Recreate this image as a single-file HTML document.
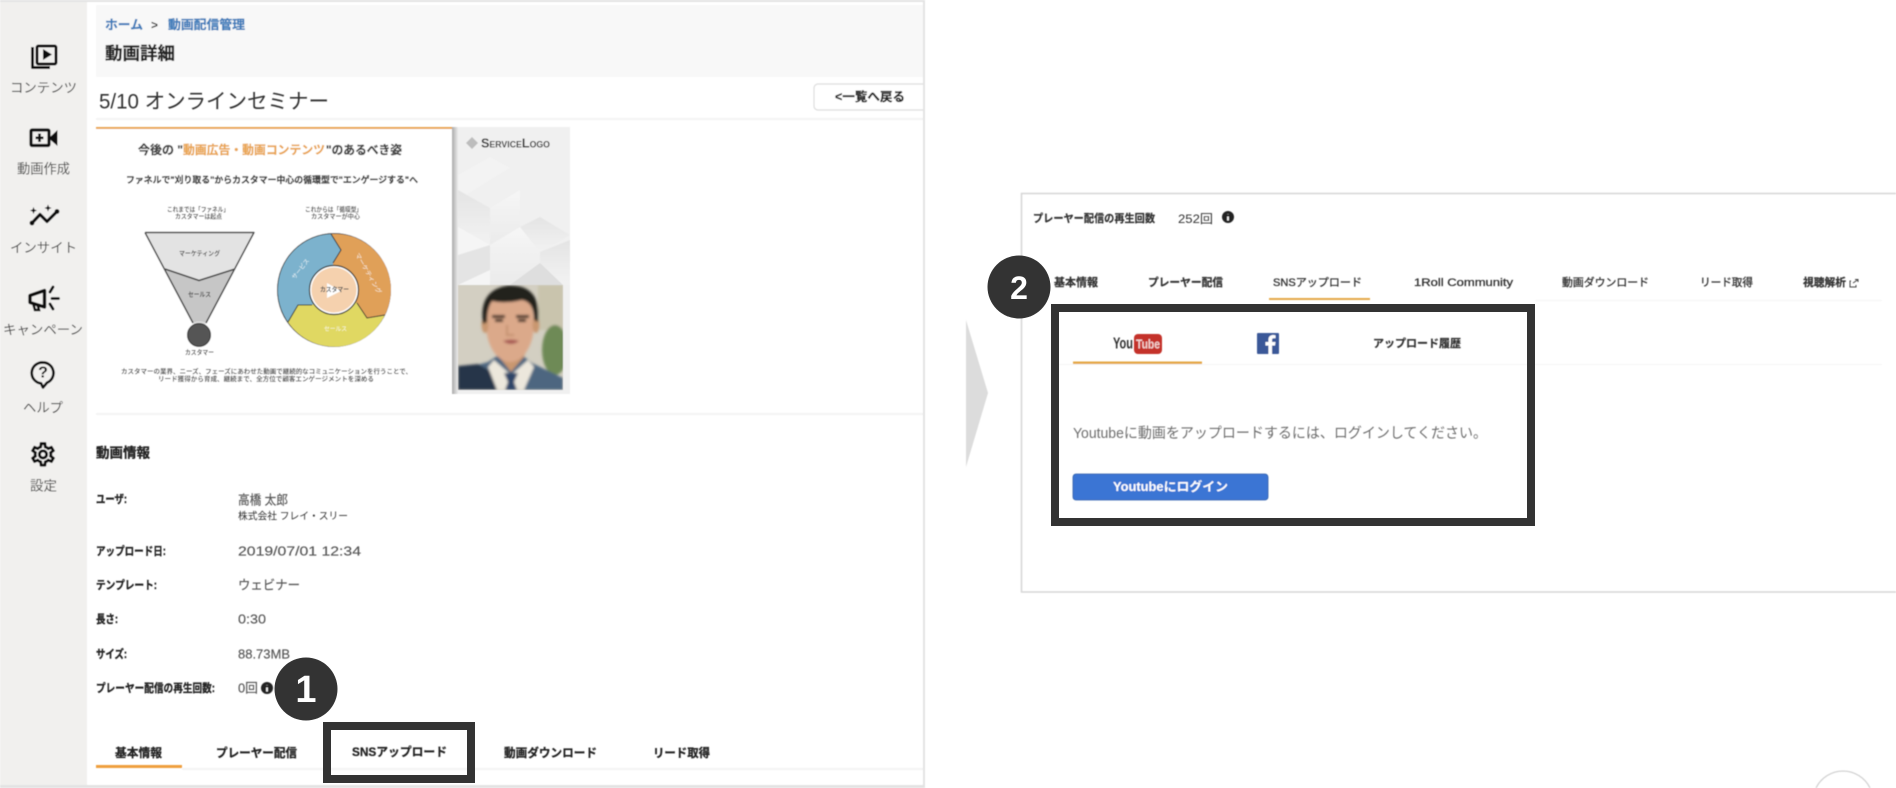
<!DOCTYPE html>
<html lang="ja"><head><meta charset="utf-8"><title>動画詳細</title>
<style>
html,body{margin:0;padding:0;background:#fff;width:1896px;height:788px;overflow:hidden}
svg{display:block;position:absolute;left:0;top:0;overflow:hidden}
text{font-family:"Liberation Sans","Noto Sans CJK JP",sans-serif;dominant-baseline:central;fill:#333}
text:not(.r){transform:translateY(1px)}
.b{font-weight:700;fill:#222;stroke:#222;stroke-width:.3px}
.g{fill:#555}
.k{font-weight:700;font-size:11.5px;fill:#222;stroke:#222;stroke-width:.3px}
.v{font-size:13px;fill:#555;stroke:#555;stroke-width:.15px}
.sm{font-size:6.5px;font-weight:700;fill:#555}
.lb{font-size:6px;font-weight:400;fill:#fff;opacity:.85}
.nav{font-size:13.4px;fill:#444}
.tab{font-size:12px;font-weight:700;fill:#222;stroke:#222;stroke-width:.25px}
.tab2{font-size:11px;font-weight:700;fill:#333;stroke:#333;stroke-width:.2px}
.tab3{font-size:11px;font-weight:400;fill:#333;stroke:#333;stroke-width:.3px}
.bl{font-weight:700;fill:#3f7cba;stroke:#3f7cba;stroke-width:.25px}
</style></head><body>
<svg width="1896" height="788" viewBox="0 0 1896 788" xmlns="http://www.w3.org/2000/svg">
<defs>
<filter id="s" filterUnits="userSpaceOnUse" x="0" y="0" width="1896" height="788"><feGaussianBlur stdDeviation="0.45"/></filter>
<filter id="s2" filterUnits="userSpaceOnUse" x="0" y="0" width="1896" height="788"><feGaussianBlur stdDeviation="0.65"/></filter>
<filter id="p" filterUnits="userSpaceOnUse" x="440" y="270" width="140" height="130"><feGaussianBlur stdDeviation="1.400"/></filter>
<linearGradient id="sh" x1="0" x2="1" y1="0" y2="0"><stop offset="0" stop-color="#a9a9a9"/><stop offset="1" stop-color="#ececec"/></linearGradient>
<linearGradient id="hx" x1="0" x2="0" y1="0" y2="1"><stop offset="0" stop-color="#dedede"/><stop offset="1" stop-color="#f4f4f4"/></linearGradient>
<linearGradient id="hy" x1="0" x2="0" y1="0" y2="1"><stop offset="0" stop-color="#fafafa"/><stop offset="1" stop-color="#e8e8e8"/></linearGradient>
<clipPath id="ph"><rect x="458" y="285" width="105" height="105"/></clipPath>
</defs>

<g filter="url(#s)">
<!-- frame -->
<rect x="0" y="0" width="925" height="2" fill="#e3e3e3"/>
<rect x="923" y="0" width="2" height="788" fill="#e3e3e3"/>
<rect x="0" y="785" width="925" height="3" fill="#e3e3e3"/>
<rect x="0" y="2" width="87" height="783" fill="#f1f0ee"/>
<rect x="96" y="5" width="827" height="72" fill="#f8f8f8"/>

<!-- sidebar icons -->
<g fill="none" stroke="#111" stroke-width="2.900" stroke-linejoin="round">
<rect x="37" y="46" width="19" height="18" rx="1.500"/>
<path d="M32.500 47V67.500H50"/>
</g>
<path d="M43 49L52 54.500L43 60Z" fill="#111"/>
<text class="nav" x="10" y="87" textLength="67" lengthAdjust="spacingAndGlyphs">コンテンツ</text>

<rect x="31" y="130" width="18" height="15.500" rx="1" fill="none" stroke="#111" stroke-width="3.200"/>
<path d="M39.500 133.500V142M35.500 137.800H43.500" stroke="#111" stroke-width="2.600"/>
<path d="M50 137L57.500 130V146L50 139.500Z" fill="#111"/>
<text class="nav" x="17" y="168" textLength="53" lengthAdjust="spacingAndGlyphs">動画作成</text>

<path d="M32 223L40 214.500L47 221.500L57 211.500" fill="none" stroke="#111" stroke-width="3.200" stroke-linejoin="round"/>
<circle cx="32" cy="223" r="2.400" fill="#111"/><circle cx="57" cy="211.500" r="2.400" fill="#111"/>
<path d="M33.500 207L34.500 209.500L37 210.500L34.500 211.500L33.500 214L32.500 211.500L30 210.500L32.500 209.500Z" fill="#111"/>
<path d="M48 204.500L49 207L51.500 208L49 209L48 211.500L47 209L44.500 208L47 207Z" fill="#111"/>
<text class="nav" x="10" y="247" textLength="67" lengthAdjust="spacingAndGlyphs">インサイト</text>

<path d="M30 295.500L44.500 290.500V307L30 302.500Z" fill="none" stroke="#111" stroke-width="3.400" stroke-linejoin="round"/>
<path d="M33 303L35 310H39L37.500 304.500" fill="none" stroke="#111" stroke-width="2.600"/>
<path d="M50 292L53 287M52 298.500H58.500M50 304L53 309" stroke="#111" stroke-width="2.800" stroke-linecap="round"/>
<text class="nav" x="3" y="329" textLength="80" lengthAdjust="spacingAndGlyphs">キャンペーン</text>

<path d="M43 362.500A10.500 10.500 0 0 1 47 382.700L43 387.500L41 383.400A10.500 10.500 0 0 1 43 362.500Z" fill="none" stroke="#111" stroke-width="2.700" stroke-linejoin="round"/>
<text class="r" x="43" y="373" text-anchor="middle" font-size="16" style="font-weight:700;fill:#111">?</text>
<text class="nav" x="23" y="407" textLength="40" lengthAdjust="spacingAndGlyphs">ヘルプ</text>

<g transform="translate(28.600 440) scale(1.200)"><path fill="#111" stroke="#111" stroke-width=".45" d="M19.430 12.980c.04-.32.07-.64.07-.98 0-.34-.03-.66-.07-.98l2.110-1.650c.19-.15.24-.42.12-.64l-2-3.460c-.09-.16-.26-.25-.44-.25-.06 0-.12.01-.17.03l-2.490 1c-.52-.4-1.080-.73-1.690-.98l-.38-2.650C14.460 2.180 14.250 2 14 2h-4c-.25 0-.46.18-.49.42l-.38 2.650c-.61.25-1.170.59-1.690.98l-2.490-1c-.06-.02-.12-.03-.18-.03-.17 0-.34.09-.43.25l-2 3.460c-.13.22-.07.49.12.64l2.110 1.650c-.04.32-.07.65-.07.98 0 .33.03.66.07.98l-2.110 1.650c-.19.15-.24.42-.12.64l2 3.460c.09.16.26.25.44.25.06 0 .12-.01.17-.03l2.490-1c.52.4 1.080.73 1.690.98l.38 2.650c.03.24.24.42.49.42h4c.25 0 .46-.18.49-.42l.38-2.650c.61-.25 1.170-.59 1.690-.98l2.490 1c.06.02.12.03.18.03.17 0 .34-.09.43-.25l2-3.460c.12-.22.07-.49-.12-.64l-2.110-1.650zm-1.980-1.710c.04.31.05.52.05.73 0 .21-.02.43-.05.73l-.14 1.130.89.7 1.080.84-.7 1.210-1.270-.51-1.040-.42-.9.68c-.43.32-.84.56-1.250.73l-1.060.43-.16 1.130-.2 1.350h-1.400l-.19-1.350-.16-1.130-1.060-.43c-.43-.18-.83-.41-1.230-.71l-.91-.7-1.060.43-1.270.51-.7-1.210 1.080-.84.89-.7-.14-1.130c-.03-.31-.05-.54-.05-.74s.02-.43.05-.73l.14-1.130-.89-.7-1.080-.84.7-1.210 1.270.51 1.040.42.9-.68c.43-.32.84-.56 1.250-.73l1.060-.43.16-1.130.2-1.350h1.390l.19 1.350.16 1.130 1.060.43c.43.18.83.41 1.230.71l.91.7 1.060-.43 1.270-.51.7 1.210-1.070.85-.89.7.14 1.130zM12 8c-2.210 0-4 1.790-4 4s1.790 4 4 4 4-1.790 4-4-1.790-4-4-4zm0 6c-1.100 0-2-.9-2-2s.9-2 2-2 2 .9 2 2-.9 2-2 2z"/></g>
<text class="nav" x="30" y="485" textLength="27" lengthAdjust="spacingAndGlyphs">設定</text>

<!-- header -->
<text class="bl r" x="105" y="25" font-size="12.500" textLength="38" lengthAdjust="spacingAndGlyphs">ホーム</text>
<text class="r" x="151" y="25" font-size="12" style="font-weight:700;fill:#333">&gt;</text>
<text class="bl r" x="168" y="25" font-size="12.500" textLength="77" lengthAdjust="spacingAndGlyphs">動画配信管理</text>
<text class="b" x="105" y="52.500" font-size="17.500" textLength="70" lengthAdjust="spacingAndGlyphs">動画詳細</text>
<text x="99" y="101" font-size="21" textLength="230" lengthAdjust="spacingAndGlyphs" fill="#333">5/10 オンラインセミナー</text>
<rect x="96" y="118" width="827" height="2" fill="#f4f4f4"/>
<path d="M923 84H818a4 4 0 0 0-4 4V106a4 4 0 0 0 4 4H923" fill="#fff" stroke="#ddd" stroke-width="1.200"/>
<text class="b r" x="835" y="97" font-size="12.500" textLength="70" lengthAdjust="spacingAndGlyphs">&lt;一覧へ戻る</text>

<!-- slide -->
<rect x="96" y="127" width="356" height="267" fill="#fff"/>
<rect x="96" y="127" width="356" height="2" fill="#e9a552"/>
<text class="b r" x="138" y="150" font-size="12" textLength="45" lengthAdjust="spacingAndGlyphs" style="fill:#444;stroke:#444">今後の "</text>
<text class="r" x="183" y="150" font-size="12" textLength="142" lengthAdjust="spacingAndGlyphs" style="font-weight:700;fill:#e9a552;stroke:#e9a552;stroke-width:.25px">動画広告・動画コンテンツ</text>
<text class="b r" x="326" y="150" font-size="12" textLength="76" lengthAdjust="spacingAndGlyphs" style="fill:#444;stroke:#444">"のあるべき姿</text>
<text class="b" x="126" y="179" font-size="9" textLength="292" lengthAdjust="spacingAndGlyphs" style="fill:#444;stroke:#444">ファネルで"刈り取る"からカスタマー中心の循環型で"エンゲージする"へ</text>
<text class="sm r" x="167" y="210" textLength="62" lengthAdjust="spacingAndGlyphs">これまでは「ファネル」</text>
<text class="sm r" x="175" y="217" textLength="47" lengthAdjust="spacingAndGlyphs">カスタマーは起点</text>
<text class="sm r" x="305" y="210" textLength="57" lengthAdjust="spacingAndGlyphs">これからは「循環型」</text>
<text class="sm r" x="311" y="217" textLength="49" lengthAdjust="spacingAndGlyphs">カスタマーが中心</text>

<!-- funnel -->
<path d="M145 232.500H254L235 269L199 280.500L165 269Z" fill="#e3e3e3"/>
<path d="M165 269L199 280.500L235 269L206 323Q199 320 193 323Z" fill="#c6c6c6"/>
<path d="M193 323Q199 320 206 323L204 327H195Z" fill="#dedede"/>
<path d="M145 232.500H254L206 323M145 232.500L193 323M165 269L199 280.500L235 269" fill="none" stroke="#444" stroke-width="1.500" stroke-linejoin="round"/>
<circle cx="199" cy="335" r="11.500" fill="#555" stroke="#333" stroke-width="1"/>
<text class="sm r" x="185" y="353" textLength="29" lengthAdjust="spacingAndGlyphs">カスタマー</text>
<text class="sm r" x="179" y="254" textLength="41" lengthAdjust="spacingAndGlyphs">マーケティング</text>
<text class="sm r" x="188" y="295" textLength="23" lengthAdjust="spacingAndGlyphs">セールス</text>

<!-- cycle -->
<circle cx="334" cy="290" r="57" fill="#333"/>
<path d="M331 234A56 56 0 0 1 385 315L367 318L357 303L334 290L333 263L341 250Z" fill="#e0a058"/>
<path d="M385 315A56 56 0 0 1 288 322L298 305H312L334 290L357 303L367 318Z" fill="#e0d862"/>
<path d="M288 322A56 56 0 0 1 331 234L341 250L333 263L334 290L312 305H298Z" fill="#7cb2cd"/>
<path d="M331 234L341 250L333 263M357 303L367 318L385 315M288 322L298 305H312" fill="none" stroke="#333" stroke-width="1"/>
<circle cx="334" cy="290" r="24.500" fill="#fff" stroke="#333" stroke-width="1.200"/>
<circle cx="334" cy="290" r="22.500" fill="#f5d1ae"/>
<path d="M327 283L341 291L327 298Z" fill="#fff"/>
<text class="sm r" x="320" y="290" textLength="29" lengthAdjust="spacingAndGlyphs">カスタマー</text>
<text class="lb r" x="0" y="0" textLength="24" lengthAdjust="spacingAndGlyphs" transform="translate(294 279) rotate(-52)">サービス</text>
<text class="lb r" x="0" y="0" textLength="46" lengthAdjust="spacingAndGlyphs" transform="translate(356 254) rotate(60)">マーケティング</text>
<text class="lb r" x="324" y="330" textLength="23" lengthAdjust="spacingAndGlyphs">セールス</text>
<text class="sm r" x="121" y="372" textLength="291" lengthAdjust="spacingAndGlyphs">カスタマーの業界、ニーズ、フェーズにあわせた動画で継続的なコミュニケーションを行うことで、</text>
<text class="sm r" x="158" y="379.500" textLength="216" lengthAdjust="spacingAndGlyphs">リード獲得から育成、継続まで、全方位で顧客エンゲージメントを深める</text>

<!-- slide side panel -->
<rect x="452" y="127" width="118" height="267" fill="#f0f0f0"/>
<g opacity=".65">
<polygon points="458,175 490,157 510,168 490,180 458,200" fill="#f6f6f6"/>
<polygon points="458,190 490,208 490,245 458,227" fill="url(#hx)"/>
<polygon points="490,208 520,190 520,227 490,245" fill="url(#hy)"/>
<polygon points="520,227 509,235 540,252 570,235 540,217" fill="url(#hx)"/>
<polygon points="458,227 490,245 490,285 458,285" fill="#f9f9f9"/>
<polygon points="490,245 520,227 540,252 540,285 490,285" fill="url(#hy)"/>
<polygon points="540,252 570,240 570,285 540,285" fill="url(#hx)"/>
<polygon points="510,285 540,263 563,285" fill="#d5d5d5"/>
<polygon points="458,255 490,245 490,270 458,285" fill="#dedede"/>
</g>
<rect x="452" y="127" width="6" height="267" fill="url(#sh)"/>
<polygon points="472,137 478,143 472,149 466,143" fill="#bdbdbd"/>
<text class="r" x="481" y="143" font-size="13" textLength="69" lengthAdjust="spacingAndGlyphs" style="font-variant:small-caps;font-weight:700;fill:#333">ServiceLogo</text>

<!-- photo -->
<g clip-path="url(#ph)">
<rect x="458" y="285" width="105" height="105" fill="#d3cfc2"/>
<g filter="url(#p)">
<rect x="538" y="285" width="25" height="45" fill="#c9c4ad"/>
<ellipse cx="555" cy="350" rx="13" ry="25" fill="#6e8a56"/>
<path d="M458 390V370L488 362L497 356H523L532 363L563 378V390Z" fill="#4d6680"/>
<path d="M458 390V366L478 364L492 372L500 390Z" fill="#26344a"/>
<path d="M494 360L511 375L528 360L534 367L524 390H497L488 367Z" fill="#ece7dc"/>
<path d="M504 373H518L514 382L517 390H505L508 382Z" fill="#2e4468"/>
<path d="M494 340Q495 352 500 358L511 372L523 358Q527 352 528 340Z" fill="#c9976f"/>
<ellipse cx="510" cy="324" rx="24" ry="38" fill="#dba98a"/>
<ellipse cx="485" cy="325" rx="3.500" ry="8" fill="#c9976f"/><ellipse cx="536" cy="325" rx="3.500" ry="8" fill="#c9976f"/>
<path d="M483 324Q478 290 508 285.500Q542 284 538 322L534 320Q534 302 522 300Q505 304 492 301Q487 308 487 322Z" fill="#24221f"/>
<rect x="492" y="315" width="13" height="3" fill="#35281f"/><rect x="516" y="315" width="13" height="3" fill="#35281f"/>
<rect x="495" y="319" width="8" height="3" fill="#3a2a22"/><rect x="518" y="319" width="8" height="3" fill="#3a2a22"/>
<path d="M503 341Q511 338 519 341Q511 347 503 341Z" fill="#a85c55"/>
<path d="M507 325V335H514" fill="none" stroke="#bd8a68" stroke-width="1.500"/>
</g>
</g>

<!-- info -->
<rect x="96" y="413" width="827" height="2" fill="#f4f4f4"/>
<text class="b" x="96" y="452" font-size="13.500" textLength="54" lengthAdjust="spacingAndGlyphs">動画情報</text>
<text class="k" x="96" y="499" textLength="31" lengthAdjust="spacingAndGlyphs">ユーザ:</text>
<text class="v" x="238" y="499" font-size="12" textLength="50" lengthAdjust="spacingAndGlyphs">高橋 太郎</text>
<text class="r" x="238" y="517" font-size="10" textLength="110" lengthAdjust="spacingAndGlyphs" fill="#555">株式会社 フレイ・スリー</text>
<text class="k" x="96" y="551" textLength="70" lengthAdjust="spacingAndGlyphs">アップロード日:</text>
<text class="v r" x="238" y="551" textLength="123" lengthAdjust="spacingAndGlyphs">2019/07/01 12:34</text>
<text class="k" x="96" y="585" textLength="61" lengthAdjust="spacingAndGlyphs">テンプレート:</text>
<text class="v r" x="238" y="585" textLength="62" lengthAdjust="spacingAndGlyphs">ウェビナー</text>
<text class="k" x="96" y="619" textLength="22" lengthAdjust="spacingAndGlyphs">長さ:</text>
<text class="v r" x="238" y="619" textLength="28" lengthAdjust="spacingAndGlyphs">0:30</text>
<text class="k" x="96" y="654" textLength="31" lengthAdjust="spacingAndGlyphs">サイズ:</text>
<text class="v r" x="238" y="654" textLength="52" lengthAdjust="spacingAndGlyphs">88.73MB</text>
<text class="k" x="96" y="688" textLength="119" lengthAdjust="spacingAndGlyphs">プレーヤー配信の再生回数:</text>
<text class="v r" x="238" y="688" textLength="20" lengthAdjust="spacingAndGlyphs">0回</text>
<circle cx="267" cy="688" r="6" fill="#222"/>
<path d="M267 685V685.200M267 687.500V691.500" stroke="#fff" stroke-width="1.700"/>

<!-- tabs left -->
<rect x="182" y="768" width="741" height="2" fill="#f4f4f4"/>
<rect x="96" y="765" width="86" height="3" fill="#ef9f3e"/>
<text class="tab r" x="115" y="753" textLength="47" lengthAdjust="spacingAndGlyphs">基本情報</text>
<text class="tab r" x="216" y="753" textLength="81" lengthAdjust="spacingAndGlyphs">プレーヤー配信</text>
<text class="tab r" x="352" y="752" textLength="95" lengthAdjust="spacingAndGlyphs">SNSアップロード</text>
<text class="tab r" x="504" y="753" textLength="93" lengthAdjust="spacingAndGlyphs">動画ダウンロード</text>
<text class="tab r" x="653" y="753" textLength="57" lengthAdjust="spacingAndGlyphs">リード取得</text>

<!-- arrow -->
<polygon points="966,320 988,393 966,467" fill="#dcdcdc"/>
</g>

<g filter="url(#s2)">
<!-- right card -->
<path d="M1896 193.500H1021.500V592H1896" fill="none" stroke="#d6d6d6" stroke-width="1.500"/>
<text class="tab2" x="1033" y="218" textLength="122" lengthAdjust="spacingAndGlyphs">プレーヤー配信の再生回数</text>
<text x="1178" y="218" font-size="12" textLength="35" lengthAdjust="spacingAndGlyphs" fill="#555">252回</text>
<circle cx="1228" cy="217" r="6" fill="#222"/>
<path d="M1228 214V214.200M1228 216.500V220.500" stroke="#fff" stroke-width="1.700"/>
<text class="tab2" x="1054" y="282" textLength="44" lengthAdjust="spacingAndGlyphs">基本情報</text>
<text class="tab2" x="1148" y="282" textLength="75" lengthAdjust="spacingAndGlyphs">プレーヤー配信</text>
<text class="tab3" x="1273" y="282" textLength="89" lengthAdjust="spacingAndGlyphs">SNSアップロード</text>
<rect x="1269" y="298" width="101" height="2" fill="#e5a946"/>
<text class="tab3" x="1414" y="282" textLength="99" lengthAdjust="spacingAndGlyphs">1Roll Community</text>
<text class="tab3" x="1562" y="282" textLength="87" lengthAdjust="spacingAndGlyphs">動画ダウンロード</text>
<text class="tab3" x="1700" y="282" textLength="53" lengthAdjust="spacingAndGlyphs">リード取得</text>
<text class="tab2" x="1803" y="282" textLength="43" lengthAdjust="spacingAndGlyphs">視聴解析</text>
<path d="M1851 281H1850V287H1856V285M1853 283L1857.500 280M1855 279.500H1858V282" fill="none" stroke="#444" stroke-width="1"/>
<rect x="1535" y="300" width="347" height="1" fill="#f4f4f4"/>
<rect x="1535" y="364" width="347" height="1" fill="#f5f5f5"/>
<rect x="1059" y="364" width="472" height="1" fill="#f5f5f5"/>

<!-- box content -->
<text class="r" x="1113" y="344" font-size="16" textLength="20" lengthAdjust="spacingAndGlyphs" style="font-weight:700;fill:#333">You</text>
<rect x="1134" y="334" width="28" height="20" rx="4" fill="#c4302b"/>
<text class="r" x="1136" y="344" font-size="13" textLength="24" lengthAdjust="spacingAndGlyphs" style="font-weight:700;fill:#f3d3d0">Tube</text>
<rect x="1073" y="361.500" width="129" height="2.500" fill="#e5a946"/>
<rect x="1257" y="333" width="22" height="21" rx="1" fill="#3b5998"/>
<path d="M1272 354V345.500H1275L1275.500 342H1272V340C1272 338.800 1272.500 338.300 1273.800 338.300H1275.500V335.300C1272 334.500 1268.500 335.500 1268.500 339.500V342H1265.500V345.500H1268.500V354Z" fill="#fff"/>
<text class="tab2" x="1373" y="343" textLength="88" lengthAdjust="spacingAndGlyphs">アップロード履歴</text>
<text x="1073" y="433" font-size="14.500" textLength="414" lengthAdjust="spacingAndGlyphs" fill="#6e6e6e" style="fill:#6e6e6e">Youtubeに動画をアップロードするには、ログインしてください。</text>
<rect x="1073" y="474" width="195" height="26" rx="3" fill="#3a75d4" stroke="#2f5fa8" stroke-width=".8"/>
<text class="r" x="1113" y="487" font-size="12.500" textLength="115" lengthAdjust="spacingAndGlyphs" style="font-weight:700;fill:#fff">Youtubeにログイン</text>

<!-- bottom right circle -->
<path d="M1816 788A30 30 0 0 1 1870 788" fill="none" stroke="#cfcfcf" stroke-width="1.200"/>
</g>

<!-- annotations -->
<rect x="327" y="726" width="144" height="53" fill="none" stroke="#333" stroke-width="8"/>
<circle cx="306" cy="689" r="31.500" fill="#333"/>
<text class="r" x="306" y="690" text-anchor="middle" font-size="38" style="font-weight:700;fill:#fff">1</text>
<rect x="1055" y="308" width="476" height="214" fill="none" stroke="#333" stroke-width="8"/>
<circle cx="1019" cy="287" r="31.500" fill="#333"/>
<text class="r" x="1019" y="288" text-anchor="middle" font-size="32" style="font-weight:700;fill:#fff">2</text>
</svg>
</body></html>
